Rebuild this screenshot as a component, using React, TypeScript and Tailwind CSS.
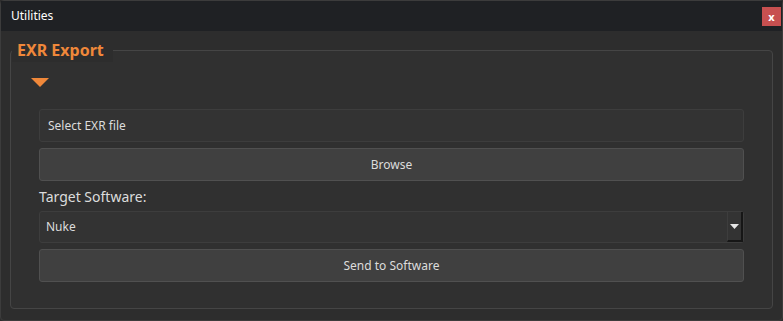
export default function App() {
  return (
    <div
      className="h-[321px] w-[783px] overflow-hidden bg-[#2d2d2d]"
      style={{ fontFamily: '"Noto Sans", "Liberation Sans", sans-serif' }}
    >
      <div className="flex h-full flex-col rounded-[4px] border border-[#3c3c3c]">
        {/* title bar */}
        <div className="flex h-[30px] items-center justify-between bg-[#1f2124] pl-[10px] pr-[1px]">
          <span className="text-[12px] text-white">Utilities</span>
          <button
            type="button"
            className="flex h-[19px] w-[19px] items-center justify-center bg-[#c75050] text-[11px] font-bold leading-none text-white"
          >
            x
          </button>
        </div>

        {/* body */}
        <div className="flex-1 px-[9px] pb-[11px] pt-[19px]">
          <div className="relative h-full rounded-[4px] border border-[#454545] bg-[#303030] px-[28px] pt-[27px]">
            <span className="absolute -top-[13px] left-[1px] bg-[#2d2d2d] pl-[5px] pr-[9px] text-[16px] font-bold leading-[24px] text-[#f0883a]">
              EXR Export
            </span>

            <svg width="18" height="9" viewBox="0 0 18 9" className="-ml-[8px] mb-[22px]">
              <polygon points="0,0 18,0 9,9" fill="#f0883a" />
            </svg>

            <div className="flex flex-col">
              <div className="flex h-[33px] items-center rounded-[3px] border border-[#3d3d3d] bg-[#333333] px-[8px] text-[12px] text-[#dcdcdc]">
                Select EXR file
              </div>
              <button
                type="button"
                className="mt-[6px] h-[33px] rounded-[3px] border border-[#505050] bg-[#404040] text-[12px] text-[#dcdcdc]"
              >
                Browse
              </button>
              <div className="mt-[4px] text-[14px] leading-[24px] text-[#dcdcdc]">Target Software:</div>
              <div className="mt-[2px] flex h-[32px] items-stretch rounded-[3px] border border-[#3d3d3d] bg-[#333333] text-[12px] text-[#dcdcdc]">
                <span className="flex flex-1 items-center px-[6px]">Nuke</span>
                <span className="flex w-[16px] items-center justify-center border-l border-[#3d3d3d] border-r-2 border-b-2 border-r-[#161616] border-b-[#161616]">
                  <svg width="9" height="5" viewBox="0 0 9 5">
                    <polygon points="0,0 9,0 4.5,5" fill="#e6e6e6" />
                  </svg>
                </span>
              </div>
              <button
                type="button"
                className="mt-[6px] h-[33px] rounded-[3px] border border-[#505050] bg-[#404040] text-[12px] text-[#dcdcdc]"
              >
                Send to Software
              </button>
            </div>
          </div>
        </div>
      </div>
    </div>
  );
}
